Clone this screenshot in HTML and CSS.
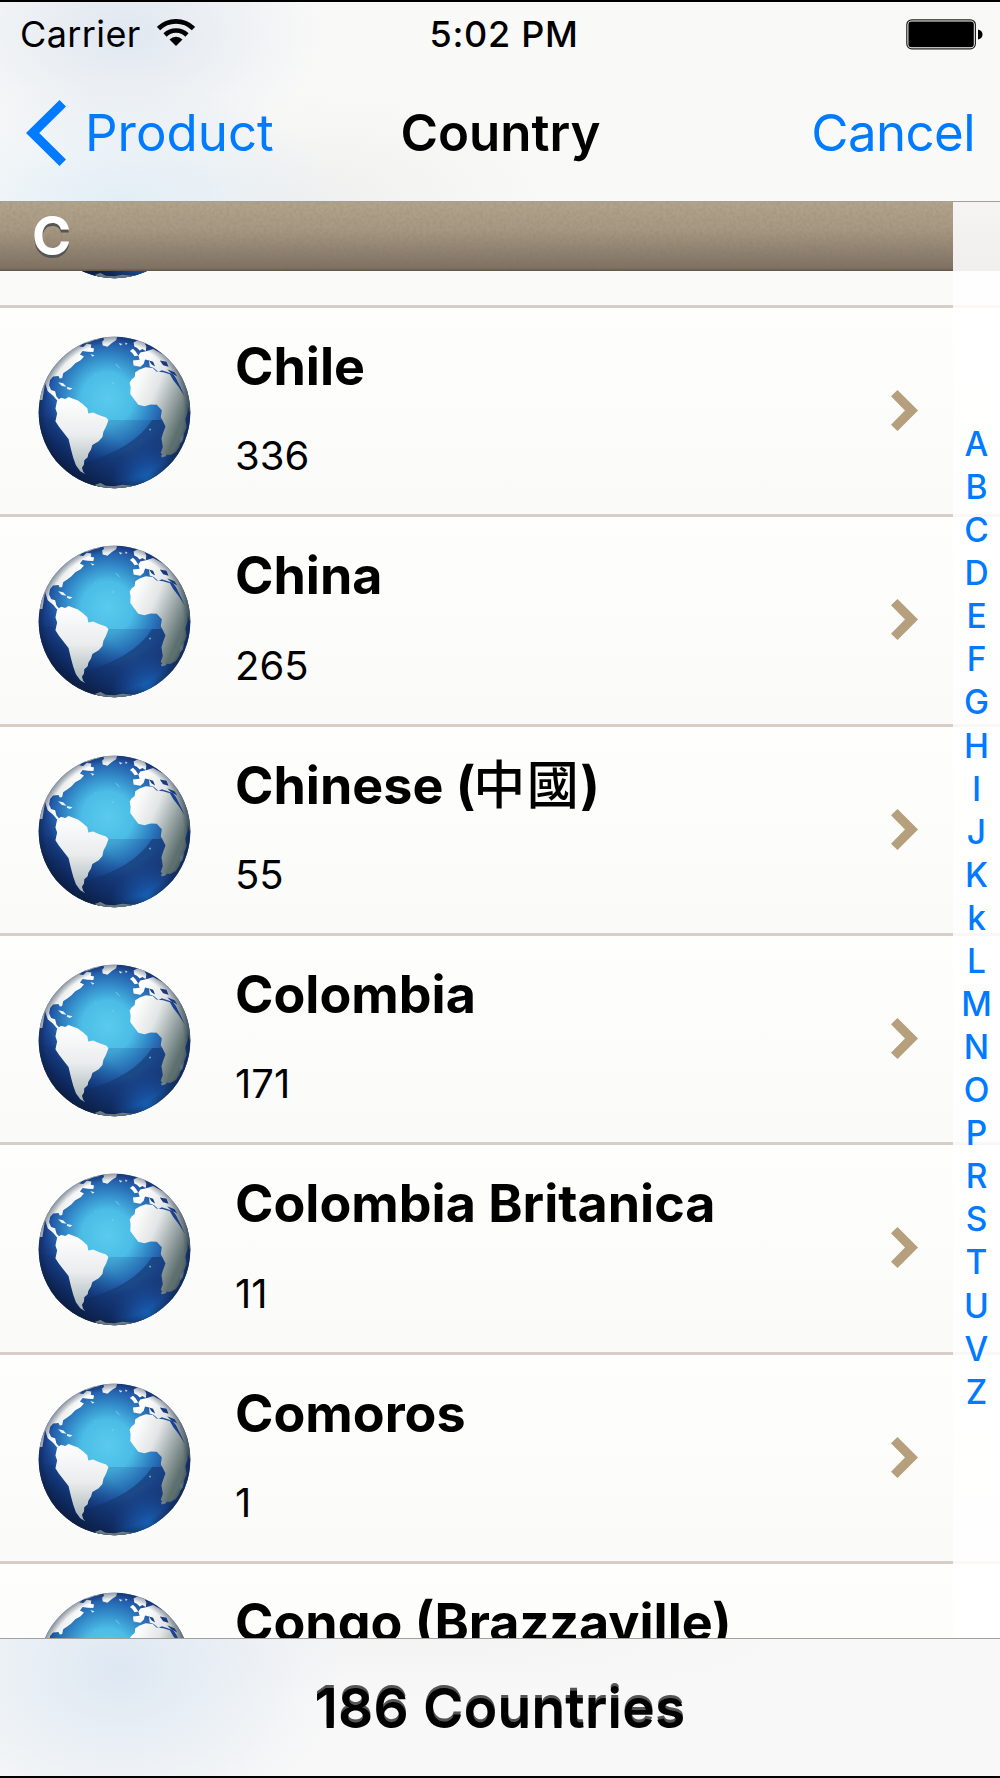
FILE: index.html
```
<!DOCTYPE html>
<html lang="en">
<head>
  <meta charset="utf-8">
  <title>Country</title>
  <link rel="stylesheet" href="styles.css">
</head>
<body>
  <svg class="defs" width="0" height="0" aria-hidden="true">
    <defs>
      <radialGradient id="sea" gradientUnits="userSpaceOnUse" cx="262" cy="235" r="275">
        <stop offset="0" stop-color="#5acbee"/>
        <stop offset=".28" stop-color="#4bbde6"/>
        <stop offset=".48" stop-color="#2f82c4"/>
        <stop offset=".66" stop-color="#1f4d9f"/>
        <stop offset=".82" stop-color="#1a3a86"/>
        <stop offset="1" stop-color="#142859"/>
      </radialGradient>
      <linearGradient id="depth" gradientUnits="userSpaceOnUse" x1="330" y1="220" x2="130" y2="470">
        <stop offset=".4" stop-color="#0b2a6b" stop-opacity="0"/>
        <stop offset="1" stop-color="#071634" stop-opacity=".9"/>
      </linearGradient>
      <radialGradient id="glow" gradientUnits="userSpaceOnUse" cx="390" cy="490" r="120">
        <stop offset="0" stop-color="#1c8cf5"/>
        <stop offset=".3" stop-color="#1868c4" stop-opacity=".7"/>
        <stop offset="1" stop-color="#1a4c9c" stop-opacity="0"/>
      </radialGradient>
      <linearGradient id="africa" gradientUnits="userSpaceOnUse" x1="340" y1="180" x2="505" y2="250">
        <stop offset="0" stop-color="#fff"/>
        <stop offset=".4" stop-color="#e3e6e6"/>
        <stop offset="1" stop-color="#5d706f"/>
      </linearGradient>
      <linearGradient id="america" gradientUnits="userSpaceOnUse" x1="0" y1="230" x2="0" y2="460">
        <stop offset="0" stop-color="#fff"/>
        <stop offset=".5" stop-color="#eaeced"/>
        <stop offset="1" stop-color="#a3b1b4"/>
      </linearGradient>
      <linearGradient id="north" gradientUnits="userSpaceOnUse" x1="80" y1="110" x2="160" y2="160">
        <stop offset="0" stop-color="#b9c3c4"/>
        <stop offset=".6" stop-color="#eceeee"/>
        <stop offset="1" stop-color="#fff"/>
      </linearGradient>
      <radialGradient id="rim" gradientUnits="userSpaceOnUse" cx="283" cy="277" r="228">
        <stop offset=".9" stop-color="#10203c" stop-opacity="0"/>
        <stop offset="1" stop-color="#10203c" stop-opacity=".45"/>
      </radialGradient>
      <clipPath id="ball"><circle cx="283" cy="277" r="226"/></clipPath>
      <filter id="grain" x="0" y="0" width="100%" height="100%">
        <feTurbulence type="fractalNoise" baseFrequency=".3" numOctaves="2" seed="4"/>
        <feColorMatrix values="0 0 0 0 .2  0 0 0 0 .15  0 0 0 0 .1  .35 0 0 0 -.12"/>
      </filter>
    </defs>
    <symbol id="globe" viewBox="55 49 456 456">
      <g clip-path="url(#ball)">
        <rect x="55" y="49" width="456" height="456" fill="url(#sea)"/>
        <path d="M55 290Q100 298 200 299L420 299Q365 380 215 418L190 510H55z" fill="#123a86" opacity=".2"/>
        <path d="M395 299H511V505H150L195 425Q340 385 395 299z" fill="#16386f" opacity=".6"/>
        <rect x="55" y="49" width="456" height="456" fill="url(#depth)"/>
        <rect x="55" y="49" width="456" height="456" fill="url(#glow)"/>
        <!-- north america -->
        <path d="M50 50H246L238 58L222 62L205 68L188 72L178 80L190 82L200 72L214 74L212 84L222 86L220 97L203 96L188 94L180 104L192 110L182 121L166 130L154 143L142 152L130 160L127 174L120 176L116 168L100 170L91 180L88 196L94 210L106 214L110 229L118 238L112 241L100 227L84 214L76 190L68 240H50z" fill="url(#north)"/>
        <path d="M115 187L130 190L140 200L126 198zM142 201L158 205L150 210L141 206zM211 103l12 3-5 5z" fill="#e8f2f6"/>
        <!-- greenland, iceland -->
        <path d="M247 45H292L288 62L275 70L262 81L248 77L246 66L252 60z" fill="#eceff0"/>
        <path d="M296 70L307 73L300 77zM314 68L322 71L317 76z" fill="#d9e2ea"/>
        <path d="M284 131l8 4 5 7 7 7-10-6zM274 187l6-2 2 6-6 2zM225 160l4 2-3 3zM386 326l5-1 1 5-5 1z" fill="#74c9ea" opacity=".8"/>
        <!-- south america -->
        <path d="M112 241L124 233L136 237L146 231L160 236L174 241L188 252L202 264L205 280L219 277L238 285L258 292L265 300L258 319L250 334L247 350L236 363L217 374L213 387L205 400L203 410L193 419L192 432L186 442L190 454L196 461L181 452L168 434L160 412L153 386L146 356L132 338L117 319L107 303L112 280L107 265z" fill="url(#america)"/>
        <!-- europe -->
        <path d="M340 68L352 62L372 68L378 80L376 94L366 88L358 92L350 84L342 80zM329 94L338 87L345 94L354 107L343 109L336 100zM360 98L380 94L398 88L430 105L470 145L505 200L511 290L494 232L480 202L466 174L457 162L444 158L424 151L414 156L400 144L388 140L386 122L374 119L370 132L360 141L340 137L338 122L358 120L354 108z" fill="url(#africa)"/>
        <path d="M386 122L398 126L404 140L394 134zM418 122L438 126L444 141L428 136zM440 148L462 157L470 170L452 160z" fill="#183d83"/>
        <!-- africa -->
        <path d="M345 157L358 149L376 142L397 144L408 155L428 157L448 163L458 180L474 201L491 226L502 235L501 275L494 298L498 320L489 343L482 357L476 380L466 395L451 403L426 404L421 397L427 380L423 354L428 337L435 319L427 302L421 291L424 270L409 254L391 253L372 258L354 254L342 238L330 222L331 201L328 188L334 179L343 171z" fill="url(#africa)"/>
        <path d="M421 405l12-4 5 6-14 4zM478 352l12-10-3 18-9 10z" fill="#6d8290"/>
        <!-- antarctica -->
        <path d="M225 492l16-5 16 8 26 2 24-5 30 3 26-3-20 16H240z" fill="#8fa19f"/>
        <rect x="55" y="49" width="456" height="456" fill="url(#rim)"/>
      </g>
    </symbol>
    <symbol id="chevron" viewBox="0 0 27 41">
      <path d="M6.5 0L27 20.5L6.5 41L0 34.7L14 20.5L0 6.3z" fill="#b59f7c"/>
    </symbol>
  </svg>

  <div class="phone">
    <header class="topbar">
      <div class="status">
        <div class="carrier">
          <span>Carrier</span>
          <svg class="wifi" width="38" height="29" viewBox="0 0 38 29">
            <g fill="none" stroke="#000" stroke-width="4.6">
              <path d="M1.5 10.5A25 25 0 0 1 36.5 10.5"/>
              <path d="M8 17A15.8 15.8 0 0 1 30 17"/>
            </g>
            <path d="M19 28L12.5 21.5A9.2 9.2 0 0 1 25.5 21.5z"/>
          </svg>
        </div>
        <span class="time">5:02 PM</span>
        <svg class="battery" width="77" height="31" viewBox="0 0 77 31">
          <rect x=".8" y=".8" width="68.6" height="29" rx="5" fill="#f9f9f8" stroke="#222" stroke-width="1.2"/>
          <rect x="2.4" y="2.4" width="65.4" height="25.8" rx="3" fill="#000"/>
          <path d="M72 10.5q4.5 1 4.5 5t-4.5 5z"/>
        </svg>
      </div>
      <nav class="nav">
        <a class="back">
          <svg width="40" height="66" viewBox="0 0 40 66"><path d="M33.5 0L40 6.4L13.2 33L40 59.6L33.5 66L0 33z" fill="#007aff"/></svg>
          <span>Product</span>
        </a>
        <h1>Country</h1>
        <a class="cancel">Cancel</a>
      </nav>
    </header>

    <main class="table">
      <h2 class="section">
        <svg class="grain" width="953" height="70"><rect width="953" height="70" filter="url(#grain)"/></svg>
        <span>C</span>
      </h2>
      <div class="scroller">
        <ul class="rows">
          <li class="row"><svg class="globe"><use href="#globe"/></svg><div class="text"></div></li>
          <li class="row">
            <svg class="globe"><use href="#globe"/></svg>
            <div class="text"><h3>Chile</h3><p>336</p></div>
            <svg class="more"><use href="#chevron"/></svg>
          </li>
          <li class="row">
            <svg class="globe"><use href="#globe"/></svg>
            <div class="text"><h3>China</h3><p>265</p></div>
            <svg class="more"><use href="#chevron"/></svg>
          </li>
          <li class="row">
            <svg class="globe"><use href="#globe"/></svg>
            <div class="text"><h3>Chinese (<span class="han">中國</span>)</h3><p>55</p></div>
            <svg class="more"><use href="#chevron"/></svg>
          </li>
          <li class="row">
            <svg class="globe"><use href="#globe"/></svg>
            <div class="text"><h3>Colombia</h3><p>171</p></div>
            <svg class="more"><use href="#chevron"/></svg>
          </li>
          <li class="row">
            <svg class="globe"><use href="#globe"/></svg>
            <div class="text"><h3>Colombia Britanica</h3><p>11</p></div>
            <svg class="more"><use href="#chevron"/></svg>
          </li>
          <li class="row">
            <svg class="globe"><use href="#globe"/></svg>
            <div class="text"><h3>Comoros</h3><p>1</p></div>
            <svg class="more"><use href="#chevron"/></svg>
          </li>
          <li class="row">
            <svg class="globe"><use href="#globe"/></svg>
            <div class="text"><h3>Congo (Brazzaville)</h3></div>
          </li>
        </ul>
      </div>
      <div class="index">
        <span>A</span><span>B</span><span>C</span><span>D</span><span>E</span><span>F</span>
        <span>G</span><span>H</span><span>I</span><span>J</span><span>K</span><span>k</span>
        <span>L</span><span>M</span><span>N</span><span>O</span><span>P</span><span>R</span>
        <span>S</span><span>T</span><span>U</span><span>V</span><span>Z</span>
      </div>
    </main>

    <footer class="toolbar">186 Countries</footer>
  </div>
</body>
</html>
```
FILE: styles.css
```
* {
  box-sizing: border-box;
  margin: 0;
  padding: 0;
}
body {
  font-family: Inter, "Noto Sans CJK TC", sans-serif;
  color: #000;
  background: #fff;
}
.defs { position: absolute; }
.phone {
  display: flex;
  flex-direction: column;
  width: 1000px;
  height: 1778px;
  border-top: 2px solid #000;
  border-bottom: 2px solid #000;
  overflow: hidden;
}

/* status + navigation */
.topbar {
  height: 200px;
  border-bottom: 1px solid #a3a09b;
  background:
    radial-gradient(ellipse 200px 130px at 125px 30px, rgba(218, 227, 238, .8), transparent),
    radial-gradient(ellipse 220px 120px at 120px 200px, rgba(222, 236, 246, .85), transparent),
    radial-gradient(ellipse 240px 110px at 310px 200px, rgba(237, 237, 237, .8), transparent),
    #f9f9f8;
}
.status {
  display: grid;
  grid-template-columns: 1fr auto 1fr;
  align-items: center;
  height: 64px;
  padding: 0 17px 0 20px;
  font-size: 36px;
}
.carrier {
  display: flex;
  align-items: center;
  gap: 16px;
  letter-spacing: .4px;
}
.wifi { margin-top: -3px; }
.time {
  margin-left: 5px;
  font-weight: 550;
  letter-spacing: .7px;
}
.battery { justify-self: end; }
.nav {
  display: grid;
  grid-template-columns: 1fr auto 1fr;
  align-items: center;
  height: 138px;
  padding: 0 25px 5px 26px;
  font-size: 51px;
}
.nav a { color: #007aff; }
.nav h1 {
  font-size: 51px;
  font-weight: 600;
}
.back {
  display: flex;
  align-items: center;
  gap: 19px;
}
.cancel {
  justify-self: end;
  letter-spacing: -.6px;
}

/* list */
.table {
  position: relative;
  flex: 1;
  display: flex;
  flex-direction: column;
  min-height: 0;
}
.section {
  position: relative;
  width: 953px;
  height: 69px;
  padding-left: 32px;
  background: linear-gradient(#b3a48c, #a79882 40%, #7f7162 96%, #5f5347);
  color: #fff;
  font-size: 53px;
  line-height: 68px;
  font-weight: 700;
  text-shadow: 0 3px #555;
  overflow: hidden;
}
.section span { position: relative; }
.grain {
  position: absolute;
  left: 0;
  top: 0;
}
.scroller {
  flex: 1;
  min-height: 0;
  overflow: hidden;
}
.rows {
  margin-top: -172.6px;
  list-style: none;
}
.row {
  display: flex;
  height: 209.4px;
  padding: 28px 82px 0 38px;
  border-bottom: 3px solid #d6cec7;
  background: linear-gradient(#fefefd, #fafaf8);
}
.globe {
  flex: none;
  width: 153px;
  height: 153px;
}
.text {
  flex: 1;
  margin-left: 44px;
  padding-top: 1px;
  white-space: nowrap;
}
.text h3 {
  font-size: 52px;
  line-height: 60px;
  font-weight: 700;
}
.text p {
  margin-top: 35.5px;
  font-size: 40px;
  line-height: 48px;
}
.han {
  margin-left: -2px;
  font-family: "Noto Sans CJK TC", sans-serif;
  font-weight: 500;
  line-height: 0;
  letter-spacing: 1.5px;
}
.more {
  flex: none;
  width: 27px;
  height: 41px;
  margin-top: 54px;
}
.index {
  position: absolute;
  top: 0;
  right: 0;
  bottom: 0;
  display: flex;
  flex-direction: column;
  align-items: center;
  width: 47px;
  padding-top: 221px;
  background: linear-gradient(#f5f4f3, #f0efee 69px, rgba(255, 255, 255, .85) 69px);
  color: #007aff;
  font-size: 33.5px;
  font-weight: 550;
}
.index span {
  height: 43.08px;
  line-height: 43px;
}

.toolbar {
  height: 138px;
  border-top: 1px solid #a0a0a0;
  background:
    radial-gradient(ellipse 220px 170px at 120px 30px, rgba(220, 231, 242, .95), transparent),
    radial-gradient(ellipse 400px 60px at 400px 0, #f3f3f4, transparent),
    #f8f8f8;
  font-size: 55px;
  line-height: 138px;
  font-weight: 600;
  letter-spacing: .25px;
  text-align: center;
  text-shadow: 0 -3px #555;
}
```
